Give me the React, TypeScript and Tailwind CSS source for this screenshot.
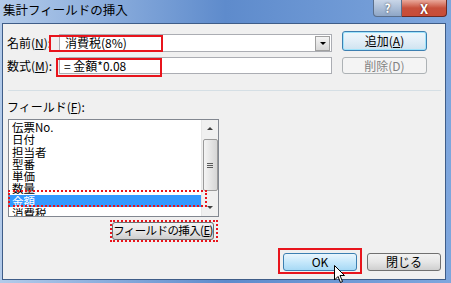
import React from 'react';

const font = { fontFamily: '"Noto Sans CJK JP", "Noto Sans", sans-serif' };

const fields = ['伝票No.', '日付', '担当者', '型番', '単価', '数量', '金額', '消費税'];

const Btn: React.FC<{ label: React.ReactNode; w: string; h: string; variant?: 'normal' | 'focus' | 'hover' | 'disabled'; className?: string }> = ({ label, w, h, variant = 'normal', className = '' }) => {
  const styles = {
    normal: 'border-[#707070] bg-gradient-to-b from-[#f2f2f2] via-[#e6e6e6] to-[#cfcfcf] text-black',
    focus: 'border-[#3c7fb1] bg-gradient-to-b from-[#eef7fc] via-[#e2eef7] to-[#cfe3f0] text-black shadow-[inset_0_0_0_1px_#9fe3fb]',
    hover: 'border-[#3c7fb1] bg-gradient-to-b from-[#eaf6fd] via-[#c6e8fb] to-[#a7d9f5] text-black',
    disabled: 'border-[#adb2b5] bg-[#f4f4f4] text-[#838383]',
  }[variant];
  return (
    <div className={`${w} ${h} ${styles} ${className} border rounded-[3px] flex items-center justify-center whitespace-nowrap text-[12px] leading-none`}>
      {label}
    </div>
  );
};

export default function App() {
  return (
    <div className="relative w-[451px] h-[283px] overflow-hidden bg-gradient-to-r from-[#b3cbea] via-[#5e8bcc] to-[#7ea6dd] flex flex-col" style={font}>
      {/* title bar */}
      <div className="h-[23px] flex items-start justify-between">
        <div className="pl-[3px] pt-[2px] text-[12.5px] leading-[16px] text-black">集計フィールドの挿入</div>
        <div className="flex mr-[4px] h-[17px]">
          <div className="w-[29px] h-full border border-[#5a6f8c] border-t-0 rounded-bl-[4px] bg-gradient-to-b from-[#c9d6e8] to-[#8ea6c6] flex items-center justify-center text-white font-bold text-[12px] leading-none [text-shadow:0_0_2px_#333]">?</div>
          <div className="w-[45px] h-full border border-[#6b2a24] border-t-0 border-l-0 rounded-br-[4px] bg-gradient-to-b from-[#e9a99c] via-[#c7503c] to-[#c94c36] flex items-center justify-center text-white font-bold text-[13px] leading-none [text-shadow:0_0_2px_#400]">X</div>
        </div>
      </div>

      {/* client area */}
      <div className="flex-1 ml-[2px] mr-[5px] mb-[3px] border border-[#3f5d88] bg-[#f0f0f0] flex flex-col">
        <div className="flex mt-[7px]">
          <div className="ml-[4px] mt-[3px] flex flex-col">
            <div className="h-[18px] flex items-center">
              <div className="w-[52px] text-[12px] leading-none">名前(<span className="underline">N</span>):</div>
              <div className="w-[273px] h-full border border-[#abadb3] bg-white flex items-center">
                <div className="flex-1 pl-[5px] text-[12px] leading-none">消費税(8%)</div>
                <div className="w-[15px] h-[15px] mr-[1px] border border-[#a0a0a0] bg-gradient-to-b from-[#f4f4f4] to-[#d8d8d8] flex items-center justify-center">
                  <div className="w-0 h-0 border-l-[3px] border-r-[3px] border-t-[3px] border-l-transparent border-r-transparent border-t-black" />
                </div>
              </div>
            </div>
            <div className="h-[17px] mt-[5px] flex items-center">
              <div className="w-[52px] text-[12px] leading-none">数式(<span className="underline">M</span>):</div>
              <div className="w-[273px] h-full border border-[#abadb3] bg-white flex items-center pl-[4px] text-[12px] leading-none">= 金額*0.08</div>
            </div>
          </div>
          <div className="ml-[10px] flex flex-col">
            <Btn label={<span>追加(<span className="underline">A</span>)</span>} w="w-[85px]" h="h-[20px]" variant="focus" />
            <Btn label="削除(D)" w="w-[85px]" h="h-[17px]" variant="disabled" className="mt-[6px]" />
          </div>
        </div>

        <div className="mt-[16px] ml-[5px] w-[433px] h-px bg-[#d5dfe5]" />

        <div className="mt-[9px] ml-[4px] h-[14px] text-[12px] leading-[14px]">フィールド(<span className="underline">F</span>):</div>

        <div className="mt-[5px] ml-[5px] w-[211px] h-[98px] border border-[#828790] bg-white flex overflow-hidden">
          <div className="flex-1 flex flex-col pt-[1px]">
            {fields.map((f) => (
              <div key={f} className={`h-[12.3px] shrink-0 pl-[3px] text-[11.5px] leading-[12.3px] ${f === '金額' ? 'bg-[#3399ff] text-white' : 'text-black'}`}>
                {f}
              </div>
            ))}
          </div>
          <div className="w-[17px] h-full bg-[#f0f0f0] border-l border-[#e6e6e6] flex flex-col items-center">
            <div className="h-[17px] flex items-center justify-center">
              <div className="w-0 h-0 border-l-[3px] border-r-[3px] border-b-[3px] border-l-transparent border-r-transparent border-b-[#404040]" />
            </div>
            <div className="mt-[2px] w-[15px] h-[52px] border border-[#9a9a9a] rounded-[2px] bg-gradient-to-r from-[#f4f4f4] to-[#d6d6d6] flex flex-col items-center justify-center gap-[1px]">
              <div className="w-[6px] h-px bg-[#5a5a5a]" />
              <div className="w-[6px] h-px bg-[#5a5a5a]" />
              <div className="w-[6px] h-px bg-[#5a5a5a]" />
            </div>
            <div className="flex-1" />
            <div className="h-[17px] flex items-center justify-center">
              <div className="w-0 h-0 border-l-[3px] border-r-[3px] border-t-[3px] border-l-transparent border-r-transparent border-t-[#404040]" />
            </div>
          </div>
        </div>

        <div className="mt-[5px] ml-[109px]">
          <Btn label={<span className="text-[11.5px] tracking-[-0.6px]">フィールドの挿入(<span className="underline">E</span>)</span>} w="w-[102px]" h="h-[18px]" />
        </div>

        <div className="mt-[13px] flex justify-end pr-[4px] gap-[10px]">
          <Btn label="OK" w="w-[74px]" h="h-[18px]" variant="hover" />
          <Btn label="閉じる" w="w-[74px]" h="h-[18px]" />
        </div>
      </div>

      {/* annotations */}
      <div className="absolute left-[49px] top-[35px] w-[114px] h-[17px] border-2 border-[#e8141c]" />
      <div className="absolute left-[56px] top-[58px] w-[106px] h-[19px] border-2 border-[#e8141c]" />
      <div className="absolute left-[8px] top-[190px] w-[199px] h-[17px] border-2 border-dotted border-[#e8141c]" />
      <div className="absolute left-[110px] top-[220px] w-[108px] h-[22px] border-2 border-dotted border-[#e8141c]" />
      <div className="absolute left-[278px] top-[248px] w-[84px] h-[26px] border-2 border-[#e8141c]" />

      {/* cursor */}
      <svg className="absolute left-[334px] top-[265px]" width="12" height="19" viewBox="0 0 12 19">
        <path d="M0.5 0.5 L0.5 15 L4 11.5 L6.5 17.5 L8.5 16.5 L6 10.5 L10.5 10.5 Z" fill="white" stroke="black" strokeWidth="1" />
      </svg>
    </div>
  );
}
